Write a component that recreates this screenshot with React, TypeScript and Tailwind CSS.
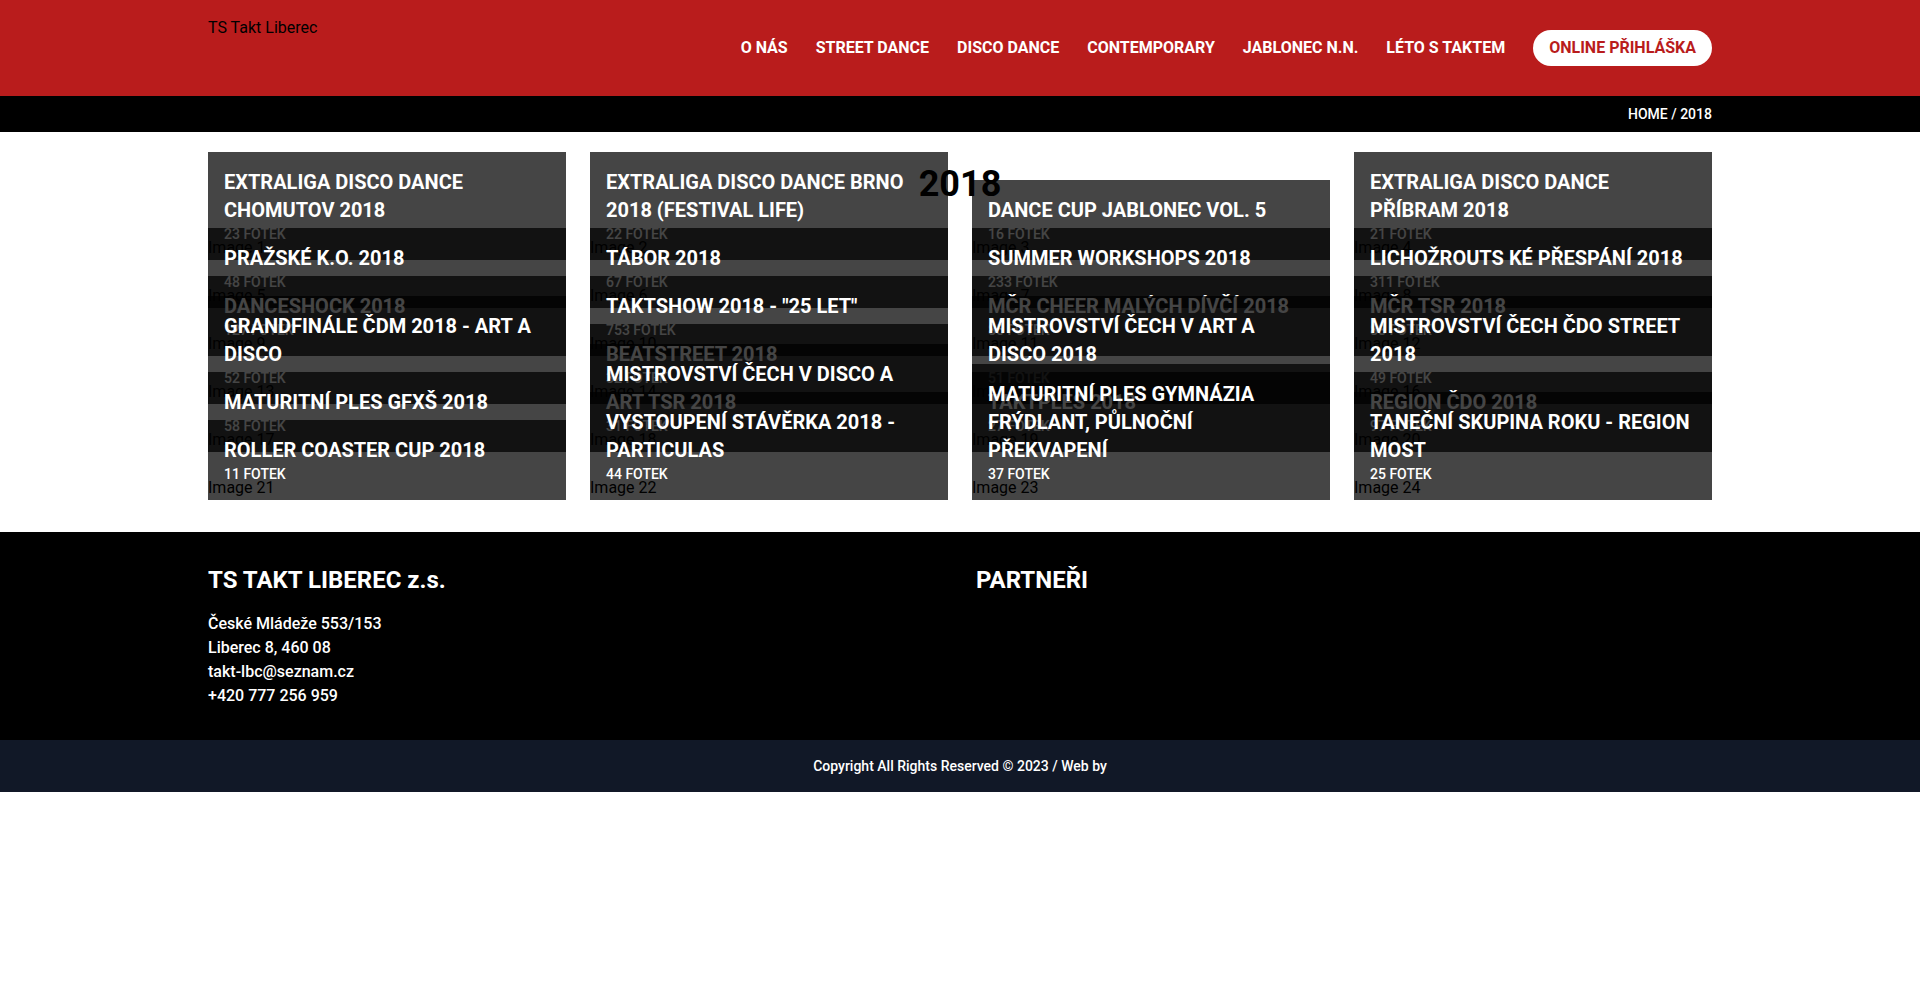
import React from 'react';

type Gallery = { title: string; count: number };

const galleries: Gallery[] = [
  { title: 'Extraliga Disco Dance Chomutov 2018', count: 23 },
  { title: 'Extraliga Disco Dance Brno 2018 (Festival Life)', count: 22 },
  { title: 'Dance Cup Jablonec vol. 5', count: 16 },
  { title: 'Extraliga Disco Dance Příbram 2018', count: 21 },
  { title: 'Pražské K.O. 2018', count: 48 },
  { title: 'Tábor 2018', count: 67 },
  { title: 'Summer workshops 2018', count: 233 },
  { title: 'Lichožrouts ké přespání 2018', count: 311 },
  { title: 'Danceshock 2018', count: 127 },
  { title: 'Taktshow 2018 - "25 let"', count: 753 },
  { title: 'MČR Cheer malých dívčí 2018', count: 85 },
  { title: 'MČR TSR 2018', count: 88 },
  { title: 'Grandfinále ČDM 2018 - Art a Disco', count: 52 },
  { title: 'Beatstreet 2018', count: 32 },
  { title: 'Mistrovství Čech v Art a Disco 2018', count: 51 },
  { title: 'Mistrovství Čech ČDO Street 2018', count: 49 },
  { title: 'Maturitní ples GFXŠ 2018', count: 58 },
  { title: 'Mistrovství Čech v Disco a Art TSR 2018', count: 31 },
  { title: 'Taktples 2018', count: 27 },
  { title: 'Region ČDO 2018', count: 97 },
  { title: 'Roller Coaster Cup 2018', count: 11 },
  { title: 'Vystoupení Stávěrka 2018 - Particulas', count: 44 },
  { title: 'Maturitní ples Gymnázia Frýdlant, Půlnoční překvapení', count: 37 },
  { title: 'Taneční skupina roku - Region Most', count: 25 },
];

const navItems = ['O nás', 'Street dance', 'Disco dance', 'Contemporary', 'Jablonec n.N.', 'Léto s Taktem'];

export default function App() {
  return (
    <div className="min-h-screen bg-white font-['Roboto','Liberation_Sans',sans-serif]">
      {/* Header */}
      <header className="bg-[#b91c1c]">
        <div className="mx-auto flex h-24 w-[1504px] items-center justify-between">
          <div className="self-start pt-4 text-base text-black">TS Takt Liberec</div>
          <nav className="flex items-center gap-7">
            {navItems.map((item) => (
              <a key={item} href="#" className="text-base font-bold uppercase text-white">
                {item}
              </a>
            ))}
            <a href="#" className="rounded-full bg-white px-4 py-1.5 text-base font-bold uppercase text-[#b91c1c]">
              Online přihláška
            </a>
          </nav>
        </div>
      </header>

      {/* Breadcrumb */}
      <div className="bg-black">
        <div className="mx-auto w-[1504px] py-2 text-right text-sm font-medium uppercase text-white">Home / 2018</div>
      </div>

      {/* Galleries */}
      <main className="pt-8 pb-8">
        <div className="mx-auto w-[1504px]">
          <h1 className="mb-8 text-center text-4xl font-bold text-black">2018</h1>
          <div className="grid grid-cols-4 auto-rows-[24px] gap-6">
            {galleries.map((g, i) => (
              <div key={i} className="flex h-6 flex-col justify-end">
                <a href="#" className="relative block shrink-0 bg-black/[0.73] p-4">
                  <h3 className="text-xl font-bold uppercase text-white">{g.title}</h3>
                  <p className="text-sm leading-5 font-medium uppercase text-white">{g.count} fotek</p>
                  <span className="absolute bottom-0 left-0 text-base text-black">Image {i + 1}</span>
                </a>
              </div>
            ))}
          </div>
        </div>
      </main>

      {/* Footer */}
      <footer className="bg-black">
        <div className="mx-auto grid w-[1504px] grid-cols-2 gap-8 py-8 text-white">
          <div>
            <h3 className="mb-4 text-2xl font-bold">TS TAKT LIBEREC z.s.</h3>
            <p className="text-base font-medium">České Mládeže 553/153</p>
            <p className="text-base font-medium">Liberec 8, 460 08</p>
            <p className="text-base font-medium">takt-lbc@seznam.cz</p>
            <p className="text-base font-medium">+420 777 256 959</p>
          </div>
          <div>
            <h3 className="text-2xl font-bold uppercase">Partneři</h3>
          </div>
        </div>
      </footer>
      <div className="bg-[#111827] py-4 text-center text-sm font-medium text-white">
        Copyright All Rights Reserved © 2023 / Web by
      </div>
    </div>
  );
}
